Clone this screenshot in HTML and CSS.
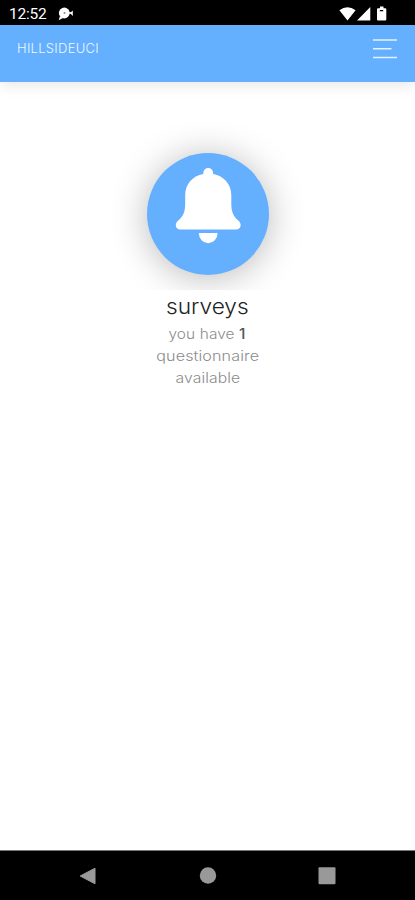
FILE: index.html
```html
<!DOCTYPE html>
<html lang="en">
<head>
<meta charset="utf-8">
<title>Hillsideuci</title>
<link rel="stylesheet" href="styles.css">
</head>
<body>
<div class="status">
  <span class="time">12:52</span>
  <svg class="notice" width="16" height="14" viewBox="0 0 16 14"><circle cx="6.3" cy="6" r="5.4" fill="#fff"/><path d="M2 9L.7 13.3 5 11zM12 6l2.8-2.5v5.5z" fill="#fff"/><path d="M11 6h3" stroke="#fff" stroke-width="1.5"/><circle cx="6.5" cy="6" r="1" fill="#888"/></svg>
  <svg class="signals" width="50" height="16" viewBox="0 0 50 16"><path d="M.4 4.2Q8.500-1.800 16.600 4.200L8.500 14.500zM31.300 1v13.500H18zM38 3.200q0-1 1-1h2V.5h3.500v1.700h1.800q1 0 1 1v10.300q0 1-1 1H39q-1 0-1-1z" fill="#fff"/><path d="M40.500 5.200h4l-.6-1.200h-2.800z" fill="#000"/></svg>
</div>
<header class="bar">
  <span class="brand">HILLSIDEUCI</span>
  <svg class="menu" width="24" height="21" viewBox="0 0 24 21"><path d="M0 2h24M0 10.800h18.500M0 19.500h24" stroke="#e4f2ff" stroke-width="1.600"/></svg>
</header>
<main class="content">
  <div class="badge-area">
    <div class="badge">
      <svg width="122" height="122" viewBox="0 0 122 122"><path d="M56.300 21v-1a4.900 4.900 0 0 1 9.800 0v1C77 22.800 84.300 31.500 84.300 42v8.500c0 8.500 2.200 13.200 7.200 17.300 3.800 3.200 2.400 8.700-2.200 8.700H33.200c-4.600 0-6-5.500-2.200-8.700 5-4.100 7.200-8.800 7.200-17.300V42C38.200 31.500 45.400 22.800 56.300 21zM51.800 80h18.800a9.400 10.200 0 0 1-18.800 0z" fill="#fff"/></svg>
    </div>
  </div>
  <h1 class="title">surveys</h1>
  <p class="message"><span class="have">you have <b>1</b></span><span class="question">questionnaire</span><span class="available">available</span></p>
</main>
<nav class="navigation">
  <svg width="18" height="18" viewBox="0 0 18 18"><path d="M16 1.200v15.600L1.200 9z" fill="#999" stroke="#999" stroke-linejoin="round"/></svg>
  <svg width="18" height="18" viewBox="0 0 18 18"><circle cx="9" cy="8.500" r="8.200" fill="#999"/></svg>
  <svg width="18" height="18" viewBox="0 0 18 18"><rect x=".5" y=".3" width="17" height="17" rx="1" fill="#999"/></svg>
</nav>
</body>
</html>
```
FILE: styles.css
```css
* { box-sizing: border-box; }
body {
  margin: 0;
  height: 900px;
  display: flex;
  flex-direction: column;
  overflow: hidden;
  background: #fff;
  font-family: Inter, sans-serif;
}
svg { display: block; flex: none; }
.status {
  height: 25px;
  flex: none;
  display: flex;
  align-items: flex-start;
  padding: 6px 27px 0 9px;
  background: #000;
  color: #fff;
}
.time {
  width: 49px;
  font: 400 15.500px/17px Roboto, sans-serif;
  letter-spacing: -.2px;
}
.notice { margin-top: 1px; }
.signals { margin-left: auto; margin-right: -1px; }
.bar {
  height: 57px;
  flex: none;
  display: flex;
  align-items: flex-start;
  justify-content: space-between;
  padding: 13px 18px 0 17px;
  background: #65afff;
  box-shadow: 0 3px 14px rgba(0, 0, 0, .1);
}
.brand {
  font-size: 13px;
  line-height: 21px;
  font-weight: 300;
  letter-spacing: .28px;
  color: #eef7ff;
}
.content {
  flex: 1;
  display: flex;
  flex-direction: column;
  align-items: center;
  padding-top: 20px;
}
.badge-area {
  width: 260px;
  height: 188px;
  padding: 50.500px 0 0 69.500px;
  overflow: hidden;
}
.badge {
  width: 122px;
  height: 122px;
  border-radius: 50%;
  background: #65afff;
  box-shadow: 0 3px 36px rgba(0, 0, 0, .28);
}
.title {
  margin: 4px 0 0;
  font-size: 21px;
  line-height: 26px;
  font-weight: 300;
  color: #222;
  transform: scaleX(1.08);
}
.message {
  margin: 4px 0 0;
  display: flex;
  flex-direction: column;
  align-items: center;
  font-size: 14px;
  line-height: 22px;
  font-weight: 300;
  letter-spacing: .1px;
  color: #8c8c8c;
  transform: translateY(-1px);
}
.message b { font-weight: 500; color: #555; }
.have { transform: scaleX(1.1); }
.question { transform: scaleX(1.15); }
.available { transform: scaleX(1.12); }
.navigation {
  height: 50px;
  flex: none;
  display: flex;
  justify-content: space-between;
  padding: 16px 79px 0;
  background: #000;
  border-top: 1px solid #777;
}
```
